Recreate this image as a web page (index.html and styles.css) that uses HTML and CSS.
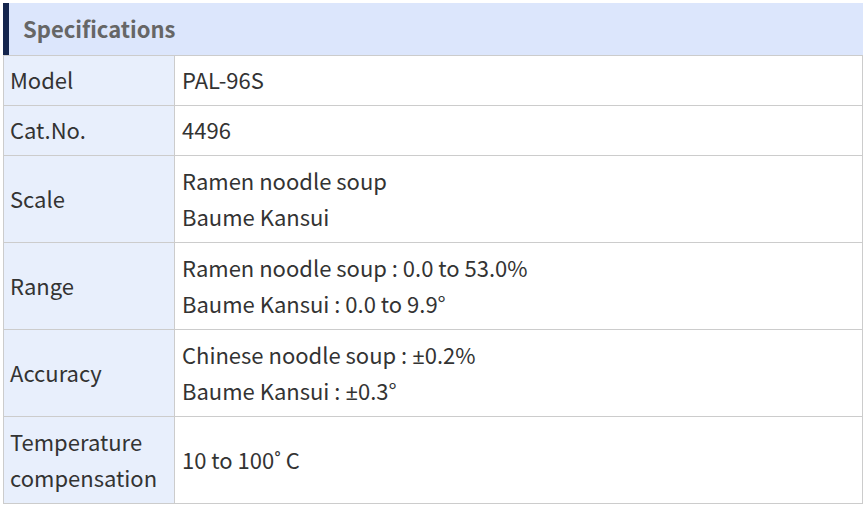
FILE: index.html
```html
<!DOCTYPE html>
<html>
<head>
<meta charset="utf-8">
<link rel="stylesheet" href="styles.css">
</head>
<body>
<div class="spec">
  <h2 class="spec-title">Specifications</h2>
  <div class="spec-grid">
    <div class="cell key one">Model</div><div class="cell val one">PAL-96S</div>
    <div class="cell key one">Cat.No.</div><div class="cell val one">4496</div>
    <div class="cell key">Scale</div><div class="cell val">Ramen noodle soup<br>Baume Kansui</div>
    <div class="cell key">Range</div><div class="cell val">Ramen noodle soup : 0.0 to 53.0%<br>Baume Kansui : 0.0 to 9.9°</div>
    <div class="cell key">Accuracy</div><div class="cell val">Chinese noodle soup : <span class="sym">±</span>0.2%<br>Baume Kansui : <span class="sym">±</span>0.3°</div>
    <div class="cell key">Temperature<br>compensation</div><div class="cell val">10 to 100˚ C</div>
  </div>
</div>
</body>
</html>
```
FILE: styles.css
```css
html, body {
  margin: 0;
  padding: 0;
  background: #fff;
}
body {
  font-family: "Noto Sans CJK JP", "Noto Sans", sans-serif;
  color: #333;
}
.spec {
  padding: 3px 5px 0 3px;
}
.spec-title {
  margin: 0;
  height: 52px;
  box-sizing: border-box;
  background: #dce6fc;
  border-left: 6px solid #14254d;
  padding-left: 14px;
  font-size: 22px;
  font-weight: 700;
  line-height: 50px;
  color: #666;
}
.spec-grid {
  display: grid;
  grid-template-columns: 172px 1fr;
  border-top: 1px solid #ccc;
  font-size: 22px;
  line-height: 36px;
}
.cell {
  display: flex;
  flex-direction: column;
  justify-content: center;
  padding: 6px 7px 8px;
  border-bottom: 1px solid #ccc;
  border-right: 1px solid #ccc;
}
.cell.one {
  padding-top: 5px;
}
.key {
  background: #e8effc;
  border-left: 1px solid #ccc;
  padding-left: 6px;
}
.val {
  display: block;
  align-content: center;
}
.sym {
  font-family: "Noto Sans", sans-serif;
  line-height: 1;
}
```
